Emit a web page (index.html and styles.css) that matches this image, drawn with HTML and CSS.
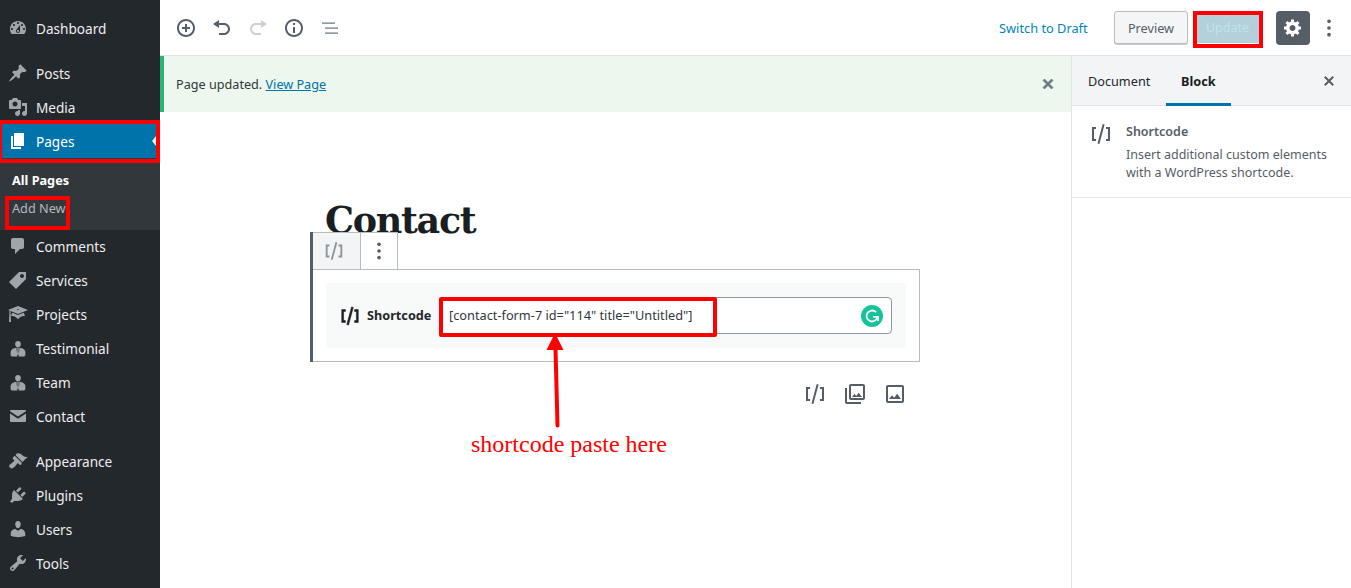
FILE: index.html
```html
<!DOCTYPE html>
<html lang="en">
<head>
<meta charset="utf-8">
<title>Edit Page</title>
<link rel="stylesheet" href="styles.css">
</head>
<body>
<div class="app">
  <nav class="admin-menu">
    <ul class="menu-group">
      <li class="menu-item"><svg class="dash" viewBox="0 0 20 20"><path d="M3.76 16h12.48c1.1-1.37 1.76-3.11 1.76-5 0-4.42-3.58-8-8-8s-8 3.58-8 8c0 1.89.66 3.63 1.76 5zM10 4c.55 0 1 .45 1 1s-.45 1-1 1-1-.45-1-1 .45-1 1-1zM6 6c.55 0 1 .45 1 1s-.45 1-1 1-1-.45-1-1 .45-1 1-1zm8 0c.55 0 1 .45 1 1s-.45 1-1 1-1-.45-1-1 .45-1 1-1zm-5.37 5.55L12 7v6c0 1.1-.9 2-2 2s-2-.9-2-2c0-.57.24-1.08.63-1.45zM4 10c.55 0 1 .45 1 1s-.45 1-1 1-1-.45-1-1 .45-1 1-1zm12 0c.55 0 1 .45 1 1s-.45 1-1 1-1-.45-1-1 .45-1 1-1zm-5 3c0-.55-.45-1-1-1s-1 .45-1 1 .45 1 1 1 1-.45 1-1z"/></svg>Dashboard</li>
    </ul>
    <ul class="menu-group">
      <li class="menu-item"><svg class="dash" viewBox="0 0 20 20"><path d="M10.44 3.02l1.82-1.82 6.36 6.35-1.83 1.82c-1.05-.68-2.48-.57-3.41.36l-.75.75c-.92.93-1.04 2.35-.35 3.41l-1.83 1.82-2.41-2.41-2.8 2.79c-.42.42-3.38 2.71-3.8 2.29s1.86-3.39 2.28-3.81l2.79-2.79L4.1 9.36l1.83-1.82c1.05.69 2.48.57 3.4-.36l.75-.75c.93-.92 1.05-2.35.36-3.41z"/></svg>Posts</li>
      <li class="menu-item"><svg class="dash" viewBox="0 0 20 20"><path d="M13 11V4c0-.55-.45-1-1-1h-1.67L9 1H5L3.67 3H2c-.55 0-1 .45-1 1v7c0 .55.45 1 1 1h10c.55 0 1-.45 1-1zM7 4.5c1.38 0 2.5 1.12 2.5 2.5S8.38 9.5 7 9.5 4.5 8.38 4.5 7 5.62 4.5 7 4.5zM14 6h5v10.5c0 1.38-1.12 2.5-2.5 2.5S14 17.88 14 16.5s1.12-2.5 2.5-2.5c.17 0 .34.02.5.05V9h-3V6zm-4 8.05V13h2v3.5c0 1.38-1.12 2.5-2.5 2.5S7 17.88 7 16.5 8.12 14 9.5 14c.17 0 .34.02.5.05z"/></svg>Media</li>
      <li class="menu-item is-current"><svg class="dash" viewBox="0 0 20 20"><path d="M6 15V2h10v13H6zm-1 1h8v2H3V5h2v11z"/></svg>Pages<span class="current-arrow"></span></li>
      <li class="submenu">
        <span class="sub-item is-strong">All Pages</span>
        <span class="sub-item">Add New</span>
      </li>
      <li class="menu-item"><svg class="dash" viewBox="0 0 20 20"><path d="M5 2h9c1.1 0 2 .9 2 2v7c0 1.1-.9 2-2 2h-2l-5 5v-5H5c-1.1 0-2-.9-2-2V4c0-1.1.9-2 2-2z"/></svg>Comments</li>
      <li class="menu-item"><svg class="dash" viewBox="0 0 20 20"><path d="M11 2h7v7L8 19l-7-7zm3 6c1.1 0 2-.9 2-2s-.9-2-2-2-2 .9-2 2 .9 2 2 2z"/></svg>Services</li>
      <li class="menu-item"><svg class="dash" viewBox="0 0 20 20"><path d="M10 10L2.54 7.02 3 18H1l.48-11.41L0 6l10-4 10 4zm0-5c-.55 0-1 .22-1 .5s.45.5 1 .5 1-.22 1-.5-.45-.5-1-.5zm0 6l5.57-2.23c.71.94 1.2 2.07 1.36 3.3-.3-.04-.61-.07-.93-.07-2.55 0-4.78 1.37-6 3.41C8.78 13.37 6.55 12 4 12c-.32 0-.63.03-.93.07.16-1.23.65-2.36 1.36-3.3z"/></svg>Projects</li>
      <li class="menu-item"><svg class="dash" viewBox="0 0 20 20"><path d="M10 3c1.600 0 2.900 1.100 2.900 2.900 0 1.800-1.300 3.600-2.900 3.600S7.100 7.700 7.100 5.900C7.100 4.100 8.400 3 10 3zM7.200 10l1.300-.3.9 8.800H4.300c-1.100 0-1.700-.5-1.700-1.400v-2.800c0-2.200 2-3.900 4.600-4.300zM12.800 10l-1.300-.3-.9 8.800h5.100c1.100 0 1.700-.5 1.700-1.400v-2.800c0-2.200-2-3.900-4.600-4.300zM9.400 10h1.200l.2 1-.3.8.4 4.200-.9 1.300-.9-1.300.4-4.200-.3-.8z"/></svg>Testimonial</li>
      <li class="menu-item"><svg class="dash" viewBox="0 0 20 20"><path d="M10 3c1.600 0 2.900 1.100 2.900 2.900 0 1.800-1.300 3.600-2.900 3.600S7.100 7.700 7.100 5.900C7.100 4.100 8.400 3 10 3zM7.200 10l1.300-.3.9 8.800H4.300c-1.100 0-1.700-.5-1.700-1.400v-2.800c0-2.200 2-3.900 4.600-4.300zM12.800 10l-1.300-.3-.9 8.800h5.100c1.100 0 1.700-.5 1.700-1.400v-2.800c0-2.200-2-3.900-4.600-4.300zM9.400 10h1.200l.2 1-.3.8.4 4.200-.9 1.300-.9-1.300.4-4.200-.3-.8z"/></svg>Team</li>
      <li class="menu-item"><svg class="dash" viewBox="0 0 20 20"><path d="M2.800 4h14.400c.5 0 .8.300.8.8v.4l-8 5.300-8-5.300v-.4c0-.5.3-.8.8-.8zM2 7.400l8 5.300 8-5.300v7.800c0 .5-.3.8-.8.8H2.800c-.5 0-.8-.3-.8-.8z"/></svg>Contact</li>
    </ul>
    <ul class="menu-group">
      <li class="menu-item"><svg class="dash" viewBox="0 0 20 20"><path d="M14.480 11.060L7.410 3.990l1.500-1.500c.5-.56 2.300-.47 3.510.32 1.210.8 1.430 1.280 2.910 2.100 1.180.64 2.450 1.260 4.450.85zm-.71.71L6.700 4.700 4.930 6.470c-.39.39-.39 1.020 0 1.410l1.060 1.060c.39.39.39 1.030 0 1.420-.6.6-1.430 1.110-2.210 1.690-.35.26-.7.53-1.010.84C1.430 13.230.4 14.990 2 16.600c1.600 1.600 3.360.57 4.690-.75.31-.31.58-.66.84-1.010.58-.78 1.090-1.610 1.690-2.210.39-.39 1.030-.39 1.420 0l1.060 1.060c.39.39 1.020.39 1.410 0z"/></svg>Appearance</li>
      <li class="menu-item"><svg class="dash" viewBox="0 0 20 20"><path d="M13.110 4.360L9.870 7.600 8 5.730l3.240-3.240c.35-.34 1.050-.2 1.560.32.52.51.66 1.210.31 1.550zm-8 1.770l.91-1.120 9.010 9.010-1.190.84c-.71.71-2.630 1.160-3.820 1.160H6.140L4.900 17.260c-.59.59-1.540.59-2.120 0-.59-.58-.59-1.530 0-2.120l1.240-1.240v-3.880c0-1.130.4-3.190 1.090-3.890zm7.260 3.970l3.240-3.240c.34-.35 1.040-.21 1.550.31.52.51.66 1.210.31 1.550l-3.240 3.250z"/></svg>Plugins</li>
      <li class="menu-item"><svg class="dash" viewBox="0 0 20 20"><path d="M10 9.250c-2.270 0-2.730-3.440-2.730-3.440C7 4.020 7.820 2 9.970 2c2.160 0 2.980 2.020 2.710 3.810 0 0-.41 3.440-2.680 3.440zm0 2.570L12.720 10c2.390 0 4.520 2.330 4.520 4.530v2.490s-3.650 1.130-7.240 1.130c-3.650 0-7.240-1.130-7.240-1.130v-2.490c0-2.250 1.940-4.480 4.470-4.480z"/></svg>Users</li>
      <li class="menu-item"><svg class="dash" viewBox="0 0 20 20"><path d="M16.680 9.770c-1.340 1.340-3.300 1.670-4.950.99l-5.410 6.520c-.99.99-2.590.99-3.580 0s-.99-2.590 0-3.570l6.520-5.420c-.68-1.650-.35-3.610.99-4.950 1.280-1.280 3.120-1.620 4.720-1.060l-2.890 2.890 2.820 2.820 2.860-2.870c.53 1.580.18 3.390-1.080 4.650zM3.810 16.210c.4.39 1.040.39 1.430 0 .4-.4.4-1.040 0-1.430-.39-.4-1.030-.4-1.430 0-.39.39-.39 1.030 0 1.430z"/></svg>Tools</li>
    </ul>
  </nav>

  <div class="editor">
    <header class="topbar">
      <div class="tools">
        <span class="tool"><svg class="icon" viewBox="0 0 20 20"><path d="M10 1c-5 0-9 4-9 9s4 9 9 9 9-4 9-9-4-9-9-9zm0 16c-3.900 0-7-3.100-7-7s3.100-7 7-7 7 3.100 7 7-3.100 7-7 7zm1-11H9v3H6v2h3v3h2v-3h3V9h-3V6z"/></svg></span>
        <span class="tool"><svg class="icon" viewBox="0 0 20 20"><path d="M12 5H7V2L1 6l6 4V7h5c2.200 0 4 1.800 4 4s-1.800 4-4 4H7v2h5c3.300 0 6-2.700 6-6s-2.700-6-6-6z"/></svg></span>
        <span class="tool is-disabled"><svg class="icon" viewBox="0 0 20 20"><path d="M8 5h5V2l6 4-6 4V7H8c-2.200 0-4 1.800-4 4s1.800 4 4 4h5v2H8c-3.300 0-6-2.700-6-6s2.700-6 6-6z"/></svg></span>
        <span class="tool"><svg class="icon" viewBox="0 0 20 20"><path d="M10 1c-5 0-9 4-9 9s4 9 9 9 9-4 9-9-4-9-9-9zm0 16c-3.900 0-7-3.100-7-7s3.100-7 7-7 7 3.100 7 7-3.100 7-7 7zM9 9h2v6H9zm0-4h2v2H9z"/></svg></span>
        <span class="tool"><svg class="icon toc" viewBox="0 0 20 20"><path d="M2 4.500h13v1.300H2zM5 9.500h13v1.300H5zM5 14.500h13v1.300H5z"/></svg></span>
      </div>
      <div class="actions">
        <a class="switch-link">Switch to Draft</a>
        <span class="btn-preview">Preview</span>
        <span class="btn-update">Update</span>
        <span class="btn-gear"><svg class="icon gear" viewBox="0 0 20 20"><path d="M18 11.500h-2.180c-.17.7-.44 1.350-.81 1.930l1.540 1.540-2.100 2.100-1.540-1.540c-.58.36-1.230.63-1.910.79v2.180H8v-2.180c-.68-.16-1.330-.43-1.910-.79l-1.540 1.540-2.120-2.120 1.540-1.540c-.36-.58-.63-1.230-.79-1.910H1V8.530h2.170c.16-.7.44-1.350.8-1.940L2.430 5.050l2.100-2.100 1.540 1.540c.58-.37 1.240-.64 1.930-.81V1.500h3v2.180c.68.16 1.330.43 1.910.79l1.540-1.540 2.120 2.120-1.540 1.540c.36.59.64 1.240.8 1.940H18v2.970zM9.500 13c1.660 0 3-1.340 3-3s-1.340-3-3-3-3 1.340-3 3 1.340 3 3 3z"/></svg></span>
        <span class="btn-more"><svg class="icon" viewBox="0 0 24 24"><circle cx="12" cy="4" r="2.200"/><circle cx="12" cy="12" r="2.200"/><circle cx="12" cy="20" r="2.200"/></svg></span>
      </div>
    </header>

    <div class="workspace">
      <main class="canvas">
        <div class="notice">
          <p class="notice-text">Page updated. <a class="notice-link">View Page</a></p>
          <svg class="icon notice-close" viewBox="0 0 20 20"><path d="M14.950 6.460L11.410 10l3.540 3.540-1.410 1.410L10 11.420l-3.530 3.530-1.420-1.420L8.580 10 5.050 6.470l1.420-1.420L10 8.580l3.540-3.530z"/></svg>
        </div>
        <div class="page">
          <h1 class="page-title">Contact</h1>
          <div class="block">
            <div class="block-toolbar">
              <span class="bt-cell is-type"><svg class="icon sc-small" viewBox="0 0 24 24"><path d="M8.500 21.400l1.900.5 5.200-19.300-1.900-.5-5.200 19.300zM3 19h4v-2H5V7h2V5H3v14zM17 5v2h2v10h-2v2h4V5h-4z"/></svg></span>
              <span class="bt-cell is-more"><svg class="icon" viewBox="0 0 24 24"><circle cx="12" cy="4" r="2.200"/><circle cx="12" cy="12" r="2.200"/><circle cx="12" cy="20" r="2.200"/></svg></span>
            </div>
            <div class="block-body">
              <div class="shortcode">
                <svg class="icon sc-label-icon" viewBox="0 0 24 24"><path d="M8.500 21.400l1.900.5 5.200-19.300-1.900-.5-5.200 19.300zM3 19h4v-2H5V7h2V5H3v14zM17 5v2h2v10h-2v2h4V5h-4z"/></svg>
                <span class="sc-label">Shortcode</span>
                <div class="sc-input">
                  <span class="sc-value">[contact-form-7 id="114" title="Untitled"]</span>
                  <svg class="grammarly" viewBox="0 0 22 22"><circle cx="11" cy="11" r="11"/><path d="M16.500 11.500a5.500 5.500 0 1 1-1.500-4.300" /><path d="M12 11.800h5v4.200" /></svg>
                </div>
              </div>
            </div>
          </div>
          <div class="inserter-row">
            <span class="ins"><svg class="icon" viewBox="0 0 24 24"><path d="M8.500 21.400l1.900.5 5.200-19.300-1.900-.5-5.200 19.300zM3 19h4v-2H5V7h2V5H3v14zM17 5v2h2v10h-2v2h4V5h-4z"/></svg></span>
            <span class="ins"><svg class="icon" viewBox="0 0 24 24"><path d="M20 4v12H8V4h12m0-2H8c-1.100 0-2 .9-2 2v12c0 1.100.9 2 2 2h12c1.100 0 2-.9 2-2V4c0-1.100-.9-2-2-2zm-8.500 9.670l1.690 2.260 2.480-3.100L19 15H9zM2 6v14c0 1.100.9 2 2 2h14v-2H4V6H2z"/></svg></span>
            <span class="ins"><svg class="icon" viewBox="0 0 24 24"><path d="M19 5v14H5V5h14m0-2H5c-1.100 0-2 .9-2 2v14c0 1.100.9 2 2 2h14c1.100 0 2-.9 2-2V5c0-1.100-.9-2-2-2zm-4.860 8.860l-3 3.870L9 13.140 6 17h12l-3.860-5.140z"/></svg></span>
          </div>
        </div>
      </main>

      <aside class="panel">
        <div class="panel-tabs">
          <span class="tab">Document</span>
          <span class="tab is-active">Block</span>
          <svg class="icon panel-close" viewBox="0 0 20 20"><path d="M14.950 6.460L11.410 10l3.540 3.540-1.410 1.410L10 11.420l-3.530 3.530-1.420-1.420L8.580 10 5.050 6.470l1.420-1.420L10 8.580l3.540-3.530z"/></svg>
        </div>
        <div class="card">
          <svg class="icon card-icon" viewBox="0 0 24 24"><path d="M8.500 21.400l1.900.5 5.200-19.300-1.900-.5-5.200 19.300zM3 19h4v-2H5V7h2V5H3v14zM17 5v2h2v10h-2v2h4V5h-4z"/></svg>
          <div class="card-text">
            <div class="card-title">Shortcode</div>
            <div class="card-desc">Insert additional custom elements with a WordPress shortcode.</div>
          </div>
        </div>
      </aside>
    </div>
  </div>
</div>

<div class="mark mark-pages"></div>
<div class="mark mark-add"></div>
<div class="mark mark-update"></div>
<div class="mark mark-code"></div>
<svg class="arrow" viewBox="0 0 24 100"><path class="arrow-head" d="M11 0L19.500 17H2.500z"/><path class="arrow-shaft" d="M11.500 16L13.500 92.500"/></svg>
<div class="note">shortcode paste here</div>
</body>
</html>
```
FILE: styles.css
```css
* { box-sizing: border-box; }
html, body { margin: 0; padding: 0; height: 100%; overflow: hidden; }
body { position: relative; font-family: "Noto Sans", sans-serif; font-size: 13px; color: #23282d; background: #fff; }
ul { list-style: none; margin: 0; padding: 0; }
p, h1 { margin: 0; }

.app { display: flex; width: 1351px; height: 588px; }

/* admin menu */
.admin-menu { width: 160px; flex: none; background: #23282d; padding-top: 11px; overflow: hidden; }
.menu-group { margin-bottom: 11px; }
.menu-item { display: flex; align-items: center; gap: 8px; height: 34px; padding-left: 8px; color: #eee; font-size: 13.6px; position: relative; }
.dash { width: 20px; height: 20px; fill: #a0a5aa; flex: none; }
.is-current { background: #0073aa; color: #fff; }
.is-current .dash { fill: #fff; }
.current-arrow { position: absolute; right: 0; top: 12px; border: 5px solid transparent; border-right: 4px solid #f1f1f1; border-left-width: 0; margin-right: 4px; }
.submenu { background: #32373c; height: 72px; padding: 8px 0 0 12px; display: flex; flex-direction: column; margin-bottom: -1px; }
.sub-item { height: 28px; line-height: 28px; font-size: 12.7px; color: #b4b9be; }
.sub-item.is-strong { color: #fff; font-weight: 700; }

/* top bar */
.editor { flex: 1; min-width: 0; display: flex; flex-direction: column; }
.topbar { height: 56px; flex: none; display: flex; justify-content: space-between; align-items: center; padding: 0 10px 0 8px; border-bottom: 1px solid #e2e4e7; }
.tools, .actions { display: flex; align-items: center; }
.tool { width: 36px; height: 36px; display: flex; align-items: center; justify-content: center; }
.icon { width: 20px; height: 20px; fill: #555d66; flex: none; display: block; }
.is-disabled .icon { fill: #ccd0d4; }
.icon.toc { fill: #6c7781; }
.switch-link { color: #0085ba; font-size: 12.8px; margin-right: 26px; width: 89px; white-space: nowrap; }
.btn-preview { width: 74px; height: 33px; line-height: 33px; text-align: center; background: #f3f5f6; border: 1px solid #bbb; border-radius: 3px; box-shadow: 0 1px 0 #ccc; color: #555d66; font-size: 12.7px; }
.btn-update { width: 63px; height: 30px; line-height: 30px; margin-left: 8px; text-align: center; background: #b4d0da; color: #c0e4ef; font-size: 12.5px; border-radius: 2px; }
.btn-gear { width: 34px; height: 34px; margin-left: 17px; background: #555d66; border-radius: 4px; display: flex; align-items: center; justify-content: center; }
.gear { fill: #fff; }
.btn-more { width: 24px; height: 24px; margin-left: 7px; display: flex; align-items: center; justify-content: center; }

/* workspace */
.workspace { flex: 1; display: flex; min-height: 0; }
.canvas { flex: 1; min-width: 0; }
.notice { height: 56px; display: flex; align-items: center; justify-content: space-between; padding: 0 13px 0 12px; background: #ecf7ed; border-left: 4px solid #2eb371; }
.notice-text { font-size: 12.65px; color: #32373c; }
.notice-link { color: #0073aa; text-decoration: underline; }
.notice-close { fill: #6c7781; stroke: #6c7781; stroke-width: .8; }

.page { padding-left: 150px; width: 770px; }
.page-title { margin: 85px 0 -13px 15px; height: 48px; line-height: 48px; font-family: "DejaVu Serif", serif; font-size: 36.5px; letter-spacing: -1.3px; font-weight: 700; color: #191e23; white-space: nowrap; }

.block { position: relative; border-left: 3px solid #555d66; width: 610px; }
.block-toolbar { display: flex; height: 37px; width: 85px; border-top: 1px solid #b5bcc2; border-right: 1px solid #b5bcc2; background: #fff; }
.bt-cell { display: flex; align-items: center; justify-content: center; }
.bt-cell.is-type { width: 48px; padding-right: 5px; background: #f3f4f5; border-right: 1px solid #b5bcc2; }
.bt-cell.is-more { flex: 1; }
.sc-small { width: 22px; height: 22px; fill: #8b939b; }
.block-body { border: 1px solid #b5bcc2; border-left: 0; padding: 13px; height: 93px; }
.shortcode { height: 65px; background: #f8f9f9; display: flex; align-items: center; padding: 0 14px 0 13px; }
.sc-label-icon { width: 22px; height: 22px; fill: #191e23; stroke: #191e23; stroke-width: .6; margin-right: 6px; }
.sc-label { width: 64px; margin: -2px 9px 0 0; font-size: 12.7px; font-weight: 700; color: #23282d; white-space: nowrap; }
.sc-input { flex: 1; height: 37px; display: flex; align-items: center; justify-content: space-between; padding: 0 8px; background: #fff; border: 1px solid #8d96a0; border-radius: 4px; }
.sc-value { margin-top: -2px; font-size: 12.75px; color: #32373c; white-space: nowrap; }
.grammarly { width: 22px; height: 22px; flex: none; }
.grammarly circle { fill: #15c39a; }
.grammarly path { fill: none; stroke: #fff; stroke-width: 1.800; }

.inserter-row { display: flex; justify-content: flex-end; width: 610px; padding: 12px 5px 0 0; }
.ins { width: 40px; height: 40px; display: flex; align-items: center; justify-content: center; }
.ins .icon { width: 24px; height: 24px; }

/* side panel */
.panel { width: 280px; flex: none; border-left: 1px solid #e2e4e7; }
.panel-tabs { height: 50px; display: flex; align-items: stretch; position: relative; background: #f3f4f5; border-bottom: 1px solid #e2e4e7; }
.tab { padding: 0 15px 0 16px; width: 94px; line-height: 51px; font-size: 12.7px; color: #23282d; white-space: nowrap; }
.tab.is-active { width: 65px; padding: 0 15px; font-weight: 700; color: #191e23; border-bottom: 3px solid #0073aa; margin-bottom: -1px; }
.panel-close { position: absolute; right: 12px; top: 15px; }
.card { display: flex; gap: 13px; padding: 17px 16px 16px 17px; height: 92px; border-bottom: 1px solid #e2e4e7; }
.card-icon { width: 24px; height: 24px; margin-top: -1px; }
.card-title { font-size: 12.5px; font-weight: 600; line-height: 18px; color: #555d66; margin-bottom: 5px; }
.card-desc { font-size: 12.5px; line-height: 18px; color: #555d66; width: 205px; }

/* annotations */
.mark { position: absolute; border: 4px solid #f00; pointer-events: none; }
.mark-pages { left: 0; top: 120px; width: 160px; height: 43px; border-left-width: 2px; }
.mark-add { left: 5px; top: 196px; width: 65px; height: 34px; }
.mark-update { left: 1193px; top: 11px; width: 70px; height: 37px; }
.mark-code { left: 439px; top: 297px; width: 278px; height: 40px; border-radius: 2px; }
.arrow { position: absolute; left: 544px; top: 333px; width: 24px; height: 100px; }
.arrow-head { fill: #f00; }
.arrow-shaft { fill: none; stroke: #f00; stroke-width: 4; stroke-linecap: round; }
.note { position: absolute; left: 471px; top: 430px; font-family: "Liberation Serif", serif; font-size: 24px; line-height: 28px; color: #f00; white-space: nowrap; }
```
